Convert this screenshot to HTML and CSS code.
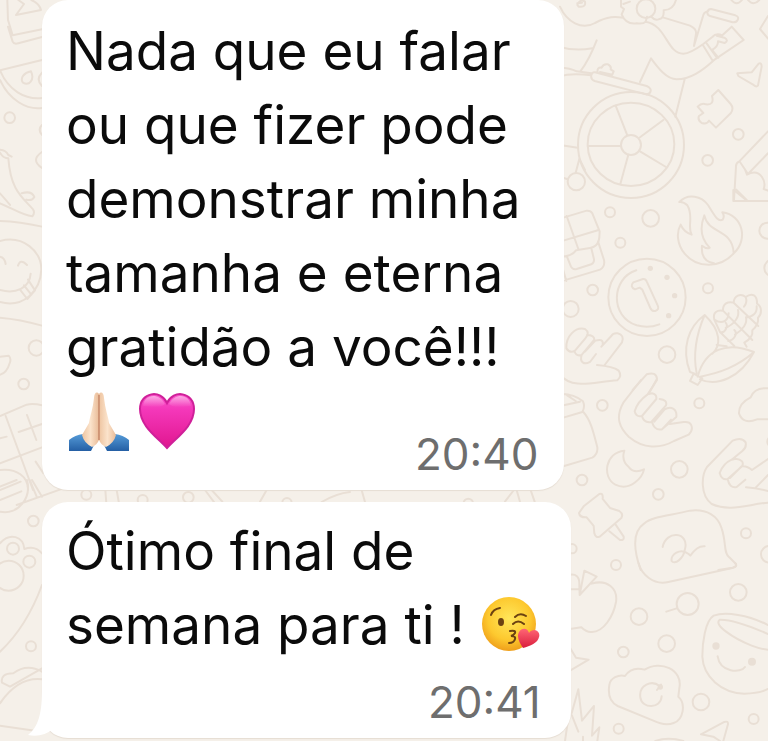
FILE: index.html
```html
<!DOCTYPE html>
<html lang="pt-BR">
<head>
<meta charset="utf-8">
<meta name="viewport" content="width=device-width, initial-scale=1">
<title>Conversa</title>
<link rel="stylesheet" href="styles.css">
</head>
<body>
<svg class="wallpaper" viewBox="0 0 768 741" preserveAspectRatio="xMidYMin slice" aria-hidden="true">
  <!-- wheelchair, puzzle piece, pencil -->
  <g transform="translate(560 0) scale(.3333)">
    <path d="M0 20C20 65 65 92 105 69C145 48 165 50 190 53M183 0V20L192 27L185 43Q198 75 230 70Q250 73 257 65L261 50M348 0Q340 30 311 31Q313 55 296 58Q284 62 275 51M190 12L210 5M257 65C320 75 320 161 370 161Q390 161 430 132L457 111Q468 98 487 106L515 80L551 120L465 178C425 215 390 238 350 238C320 237 295 205 273 175L240 246M311 53L390 77Q411 87 408 102L402 138L428 52Q430 36 445 33M430 137L458 182M440 130L469 171M475 173L456 150Q475 140 474 124L494 129Q508 122 493 113L470 107M374 238L346 350M453 27L526 46Q538 50 533 60Q529 68 518 67L450 48Q440 45 443 34Q445 27 453 27ZM0 141Q45 154 97 145M110 121C95 160 85 183 61 214M0 203Q30 203 50 214L94 220M0 230Q30 218 94 226M105 217L260 258Q276 265 271 276Q266 287 250 281L104 243Q91 238 94 225Q97 215 105 217ZM113 218Q110 201 125 203Q130 190 144 193Q155 199 152 208L161 214L157 224L120 216"/>
    <circle cx="258" cy="26" r="28"/><circle cx="213" cy="435" r="159"/><ellipse cx="213" cy="433" rx="130" ry="125"/><circle cx="213" cy="435" r="30"/>
    <path d="M167 317L202 406M310 360L240 412M83 438H183M240 454L318 501M205 464L181 552M0 435L53 443M0 530L23 538M47 518L58 477L75 510"/>
    <circle cx="49" cy="545" r="26"/><circle cx="443" cy="481" r="16"/><circle cx="535" cy="403" r="16"/>
    <path d="M532 220L575 217L596 191Q605 187 605 200L594 257Q588 263 578 253L535 228ZM475 270L512 312Q523 325 512 340L468 383L447 362Q441 374 425 369Q412 360 417 348L430 339L413 320Q425 307 438 313Q464 316 456 288ZM624 394L538 484Q527 489 528 501L522 600M540 486L564 522L624 460M555 508L561 524Q590 508 606 531Q618 548 611 567L624 572M529 569L560 600M624 48L600 87L624 116M514 0Q530 20 546 0M564 0Q580 20 598 0M52 15Q60 -5 75 5Q78 20 63 20Q52 22 52 10L66 8"/>
  </g>
  <!-- flame, coin, corn, hand -->
  <g transform="translate(560 190) scale(.3333)">
    <path d="M520 0V33H624M525 3L562 33M358 36C385 8 425 19 444 45C464 76 474 98 488 89Q495 78 487 67C550 75 564 150 523 188C482 236 411 236 374 191C350 162 349 125 362 104Q371 126 395 134C381 109 402 79 382 46Q370 34 358 36ZM462 220C429 215 424 190 426 167Q441 179 449 173C419 143 420 110 433 76C445 134 517 115 521 188M0 86L80 62Q92 61 97 70L119 124Q119 145 115 157L132 210Q136 230 120 239L0 275M20 78L55 177M0 155L116 120M0 200Q35 200 48 181L90 174Q112 170 115 153M20 198L33 230Q38 240 50 237L94 223Q103 218 102 208L94 175M0 207L19 273"/>
    <circle cx="150" cy="67" r="15"/><circle cx="272" cy="85" r="25"/><circle cx="181" cy="158" r="15"/><circle cx="98" cy="300" r="16"/><circle cx="444" cy="295" r="15"/><circle cx="32" cy="357" r="24"/><circle cx="321" cy="494" r="25"/><circle cx="622" cy="122" r="24"/><circle cx="638" cy="234" r="25"/>
    <circle cx="261" cy="322" r="116"/><path d="M229 241C153 265 149 380 230 406Q265 416 298 403M225 298Q208 290 220 277L249 267Q257 266 260 274L293 346Q299 359 286 363Q276 365 271 354L247 299L239 293Z"/>
    <g class="dot"><circle cx="271" cy="235" r="8"/><circle cx="321" cy="262" r="8"/><circle cx="344" cy="317" r="8"/><circle cx="326" cy="377" r="8"/></g>
    <path d="M434 375C385 410 363 475 390 546L404 551M434 375C406 440 400 500 410 550M434 375C485 423 483 467 457 491M413 560C435 477 500 453 582 486C541 565 470 590 420 568M421 560C480 548 532 530 582 486M401 551L427 565L413 585L390 573ZM470 465L500 469M463 389C457 366 473 359 489 362C488 341 504 333 521 338C522 317 542 308 557 321C577 306 592 317 591 341C607 350 606 373 594 383C597 400 587 412 577 421C580 439 565 451 553 458L560 470M463 389L480 426L523 468M489 362L577 450M521 338L595 408M463 389C488 405 505 391 506 370M497 414C523 402 540 380 534 360M525 434C548 420 563 400 558 382C578 381 592 370 590 349M480 426C495 431 506 408 497 398M505 453C523 450 534 430 523 420M557 321Q563 337 552 350M0 555C40 600 100 575 172 571Q187 558 176 542Q160 529 111 525M134 525L186 457Q194 435 173 430Q160 428 154 438L124 470M19 475C17 440 45 410 75 417Q91 428 76 445L45 482Q30 491 19 475ZM81 435Q103 435 103 449L65 495Q48 500 43 483M65 495C58 516 72 526 90 516L108 492M75 485L106 452Q132 444 128 465M218 600L260 553Q288 544 291 566L267 610"/>
  </g>
  <!-- hands, moon, pin, speech -->
  <g transform="translate(560 380) scale(.3333)">
    <path d="M243 0L190 68C164 114 180 145 207 171C250 207 300 207 342 183L386 164Q401 150 393 134Q388 124 371 126L330 132M291 0L263 43Q232 65 224 94Q228 112 246 108L289 57Q291 43 276 40L263 43M246 108Q251 130 274 126L318 76Q323 60 299 57M276 126Q284 153 306 148L349 111C352 85 332 77 314 88L283 125M306 148L333 119M0 42Q40 40 69 64Q76 80 67 96L0 116M0 78L60 65M70 96C92 120 100 155 112 202Q114 223 97 233L0 262M17 43L47 63M193 212C135 217 125 292 166 314C212 336 248 290 252 268Q223 282 207 262Q183 242 193 212ZM118 342Q130 337 128 357L150 384L178 393Q191 402 184 414L119 470Q107 475 103 460L101 438L80 412Q59 413 57 399L71 379ZM148 454L180 480Q193 482 191 470L167 434M624 118H591Q549 135 537 100Q536 70 572 52Q584 21 624 25M624 368C560 374 510 396 455 372C420 345 424 286 441 261L518 182Q545 170 557 187Q560 203 548 212L515 239Q490 250 479 279Q485 302 503 297L547 258Q554 240 527 236L515 239M503 297Q508 325 530 321L556 299M510 294L545 259Q560 256 576 270L624 237M587 323L624 285M558 322Q590 324 624 333M242 570C221 510 217 455 252 431C276 409 330 407 390 392C441 386 474 408 485 445C500 490 490 520 508 532L528 552Q531 560 518 563L475 570M308 501C318 449 389 456 375 507C371 538 343 555 335 543C331 525 360 501 386 522L391 527C405 508 416 498 434 499"/>
    <circle cx="127" cy="76" r="16"/><circle cx="418" cy="70" r="15"/><circle cx="358" cy="268" r="25"/><circle cx="66" cy="300" r="16"/><circle cx="295" cy="343" r="16"/><circle cx="558" cy="460" r="15"/><circle cx="628" cy="523" r="25"/><circle cx="36" cy="506" r="14"/><circle cx="638" cy="185" r="16"/>
  </g>
  <!-- apple, cloud, mug -->
  <g transform="translate(560 560) scale(.3333)">
    <path d="M236 10C244 42 280 77 325 66L517 24Q535 20 525 9M25 45Q60 37 58 75L59 105L73 32L110 50L59 105M25 88H55M95 71C142 57 174 85 168 126C160 170 130 216 96 216Q80 218 64 202L25 208M25 255L48 293L86 299L25 335M319 155L350 145M624 195C566 165 496 154 461 167C435 183 427 250 427 290C430 350 484 399 553 401Q600 400 624 387M624 222C570 198 514 178 480 179C457 193 520 235 575 257Q600 267 624 269M473 289C480 338 543 340 555 321M148 375C151 354 176 343 195 348Q215 318 254 329C300 299 370 328 358 385L355 410C378 430 371 479 341 489Q315 499 280 482L173 438C146 425 144 400 148 375ZM305 409C303 447 246 448 241 412C236 375 275 359 299 378M291 390L303 374M423 523L493 486Q505 482 504 493L490 543M423 523L460 530L480 543M286 543Q325 530 370 543M35 460L55 388L66 482L102 438L96 527L118 502L112 543M35 465L55 515M15 543L24 480M69 530V543"/>
    <circle cx="168" cy="15" r="15"/><circle cx="383" cy="132" r="33"/><circle cx="237" cy="170" r="25"/><circle cx="320" cy="251" r="25"/><circle cx="190" cy="276" r="16"/><circle cx="535" cy="97" r="25"/><circle cx="423" cy="426" r="25"/><circle cx="176" cy="506" r="15"/><circle cx="581" cy="477" r="15"/>
    <g class="dot"><circle cx="468" cy="258" r="11"/><circle cx="576" cy="305" r="12"/><circle cx="301" cy="381" r="8"/></g>
  </g>
  <!-- left edge -->
  <g transform="scale(.3333)">
    <path d="M22 0L24 60L38 106L126 88M24 80L38 125Q42 134 55 130L126 111M55 0L72 12L48 45L123 30Q118 10 94 0M0 211L126 180M0 211C24 270 75 300 126 294M0 240C27 300 80 330 126 324M68 247C60 234 72 218 93 214C105 240 87 259 68 247ZM126 218Q106 238 126 258M0 449Q18 450 25 465L35 470M0 458Q10 475 25 475C32 570 65 590 99 628Q106 638 97 649C65 645 36 624 0 610M0 580Q18 600 30 615M65 580Q95 571 103 591Q96 604 79 599M0 663Q60 665 126 680M126 375Q112 388 126 405M126 456Q90 480 126 504"/>
    <circle cx="29" cy="353" r="16"/>
  </g>
  <g transform="translate(0 240) scale(.3333)">
    <path d="M0 3C70 -16 124 35 124 88C122 155 68 205 0 186M0 150C47 163 89 145 92 101M60 149L82 177L105 151L84 119M72 136L94 164M0 50Q14 52 17 72M54 77Q61 55 81 75M0 233Q60 238 126 257M0 350L26 347Q34 355 30 367Q20 401 0 404M0 528L80 494Q100 490 126 496M17 528L99 750M0 670L126 622M56 576L126 552M81 525L109 600M0 595L20 590M0 690C50 684 85 710 84 750M0 740L50 720M107 665L130 700"/>
    <circle cx="71" cy="432" r="16"/><circle cx="109" cy="324" r="23"/>
  </g>
  <g transform="translate(0 480) scale(.3333)">
    <path d="M0 95C55 105 95 55 81 0M0 30L62 5M0 60L64 34M89 0L110 50M96 0L126 50M50 75L190 25M0 190C30 155 70 170 73 207Q105 195 126 220M0 515Q80 440 126 315M6 608Q0 580 40 580Q80 550 126 575M6 608L30 620L126 565M0 670Q55 590 126 598M0 737L126 755"/>
    <circle cx="100" cy="123" r="16"/><circle cx="39" cy="206" r="18"/><circle cx="88" cy="245" r="18"/><circle cx="26" cy="287" r="45"/><circle cx="93" cy="499" r="15"/>
  </g>
  <!-- strip between the bubbles -->
  <g transform="translate(60 480) scale(.3333)">
    <path d="M136 30L139 70M170 30L177 70M435 30L465 70M455 30L487 65M620 30L600 65M785 66Q830 40 870 36M905 30L915 66M1335 65L1362 30M1370 30L1380 65M1412 30L1424 65"/>
    <circle cx="79" cy="44" r="15"/><circle cx="248" cy="60" r="15"/><circle cx="385" cy="52" r="16"/><circle cx="681" cy="68" r="14"/><circle cx="1225" cy="70" r="14"/>
  </g>
</svg>

<main class="chat">
  <article class="bubble">
    <p class="text">Nada que eu falar<br>ou que fizer pode<br>demonstrar minha<br>tamanha e eterna<br>gratidão a você!!!</p>
    <div class="last-line">
      <svg class="emoji" viewBox="0 0 60 60" role="img" aria-label="Mãos unidas">
        <defs>
          <linearGradient id="sleeve" x2="0" y2="1"><stop stop-color="#559bd8"/><stop offset="1" stop-color="#245fa4"/></linearGradient>
          <linearGradient id="skin"><stop stop-color="#eec4a0"/><stop offset=".5" stop-color="#fbe3cb"/><stop offset="1" stop-color="#e9bb97"/></linearGradient>
        </defs>
        <path fill="url(#sleeve)" d="M0 48Q6 43 14 42L25 53L22 59H0ZM60 48Q54 43 46 42L35 53L38 59H60Z"/>
        <path fill="url(#skin)" d="M30 2C28 -1 25 1 25 6C24 16 21 24 20 31L13 43Q15 51 23 55Q28 53 30 48Z"/>
        <path fill="url(#skin)" d="M30 2C32 -1 35 1 35 6C36 16 39 24 40 31L47 43Q45 51 37 55Q32 53 30 48Z"/>
        <path fill="none" stroke="#b56d50" d="M30 3V48"/>
      </svg>
      <svg class="emoji" viewBox="0 0 60 60" role="img" aria-label="Coração rosa">
        <defs>
          <linearGradient id="pink" x2="0" y2="1"><stop stop-color="#f957cb"/><stop offset=".3" stop-color="#f437b9"/><stop offset="1" stop-color="#e0168f"/></linearGradient>
          <linearGradient id="shine" x2="0" y2="1"><stop stop-color="#fff" stop-opacity=".5"/><stop offset="1" stop-color="#fff" stop-opacity="0"/></linearGradient>
        </defs>
        <path fill="url(#pink)" stroke="#cf2099" stroke-width="2" d="M30 56C20 45 3 34 3 17C3 0 24-3 30 11C36-3 57 0 57 17C57 34 40 45 30 56Z"/>
        <path fill="url(#shine)" d="M6 14C7 2 22 0 28 12Q24 17 6 14ZM54 14C53 2 38 0 32 12Q36 17 54 14Z"/>
      </svg>
      <time class="time" datetime="20:40">20:40</time>
    </div>
  </article>

  <article class="bubble bubble-tail">
    <svg class="tail" viewBox="0 0 36 50" aria-hidden="true"><path d="M14 0C14 25 11 38 0 47Q14 50 25 41L36 48V0Z"/></svg>
    <p class="text">Ótimo final de<br>semana para ti ! <svg class="emoji face" viewBox="0 0 60 60" role="img" aria-label="Rosto mandando beijo">
        <defs>
          <radialGradient id="yellow" cx=".5" cy=".4" r=".6"><stop stop-color="#ffe65a"/><stop offset=".65" stop-color="#fdc92f"/><stop offset="1" stop-color="#ef9f1b"/></radialGradient>
          <linearGradient id="red" x2="0" y2="1"><stop stop-color="#ff6675"/><stop offset="1" stop-color="#d91e3d"/></linearGradient>
        </defs>
        <circle cx="29" cy="30" r="27" fill="url(#yellow)"/>
        <ellipse cx="21" cy="28" rx="3" ry="4" fill="#6c4211"/>
        <path fill="none" stroke="#6c4211" stroke-width="2" stroke-linecap="round" d="M11 21Q13 15 20 14M35 23Q40 18 46 22M33 30Q38 25 44 30M30 37Q36 36 35 39Q34 41 31 42Q36 42 35 45Q34 49 29 49"/>
        <path fill="url(#red)" d="M43 54C40 49 36 43 39 38C42 33 48 34 49 39C53 33 61 37 59 43C58 49 50 52 43 54Z"/>
      </svg></p>
    <div class="last-line"><time class="time" datetime="20:41">20:41</time></div>
  </article>
</main>
</body>
</html>
```
FILE: styles.css
```css
* {
  box-sizing: border-box;
}

body {
  margin: 0;
  position: relative;
  min-height: 100vh;
  overflow: hidden;
  background: #f5f0e9;
  color: #0b0b0b;
  font-family: Inter, "Liberation Sans", sans-serif;
}

.wallpaper {
  position: absolute;
  inset: 0;
  width: 100%;
  height: 100%;
  fill: none;
  stroke: #e9dfd5;
  stroke-width: 6;
  stroke-linecap: round;
  stroke-linejoin: round;
}

.wallpaper .dot {
  fill: #e9dfd5;
  stroke: none;
}

.chat {
  position: relative;
  display: flex;
  flex-direction: column;
  align-items: flex-start;
  gap: 12px;
  padding: 0 42px;
}

.bubble {
  position: relative;
  padding: 14px 26px 8px 24px;
  border-radius: 26px;
  background: #fff;
  box-shadow: 0 1px 1px #e6ddd3;
}

.bubble-tail {
  padding-top: 12px;
  padding-right: 30px;
}

.text {
  margin: 0;
  padding-right: 18px;
  font-size: 53px;
  line-height: 74px;
  white-space: nowrap;
}

.bubble-tail .text {
  padding-right: 1px;
}

.last-line {
  display: flex;
  gap: 8px;
  padding-left: 3px;
}

.emoji {
  width: 60px;
  height: 60px;
  margin-top: 8px;
}

.face {
  margin: 0;
  vertical-align: -10px;
}

.time {
  margin-left: auto;
  padding-top: 42px;
  color: #6e6e6e;
  font-size: 44px;
  line-height: 56px;
}

.bubble-tail .time {
  padding-top: 12px;
}

.tail {
  position: absolute;
  left: -14px;
  bottom: 0;
  width: 36px;
  height: 50px;
  fill: #fff;
}
```
